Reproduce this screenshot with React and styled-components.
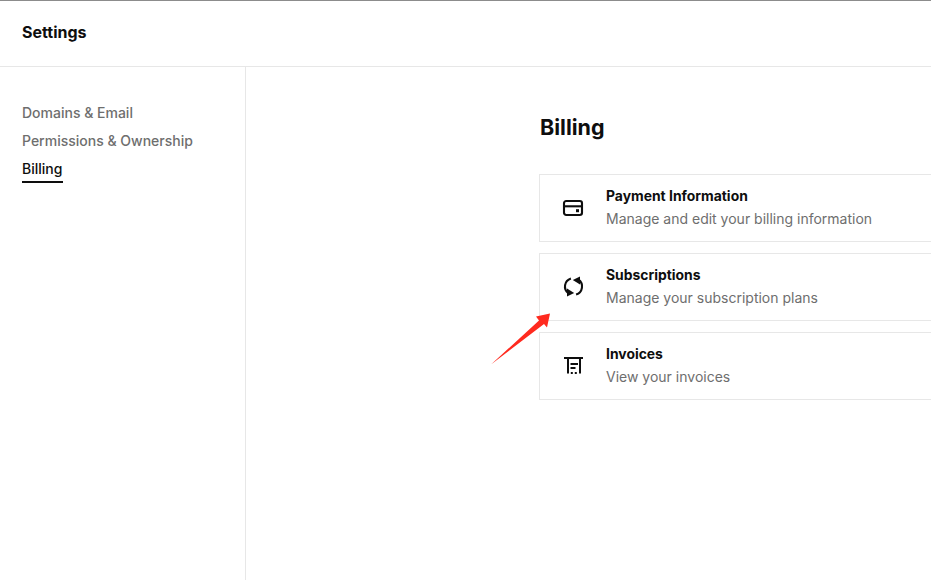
import React from "react";
import styled, { createGlobalStyle } from "styled-components";

const Global = createGlobalStyle`
  html, body { margin: 0; padding: 0; background: #fff; overflow: hidden; }
  body { font-family: Inter, "Liberation Sans", sans-serif; }
`;

const Page = styled.div`
  position: relative;
  width: 931px;
  height: 580px;
  overflow: hidden;
  display: flex;
  flex-direction: column;
  border-top: 1px solid #8c8c8c;
  box-sizing: border-box;
`;

const Header = styled.header`
  height: 66px;
  flex: none;
  box-sizing: border-box;
  border-bottom: 1px solid #e7e7e7;
  padding: 0 22px 4px;
  display: flex;
  align-items: center;
`;

const HeaderTitle = styled.h1`
  margin: 0;
  font-size: 16px;
  font-weight: 700;
  color: #0e0e0e;
`;

const Body = styled.div`
  flex: 1;
  display: flex;
  min-height: 0;
`;

const Sidebar = styled.nav`
  width: 246px;
  flex: none;
  box-sizing: border-box;
  border-right: 1px solid #e7e7e7;
  padding: 35px 22px 0;
  display: flex;
  flex-direction: column;
  align-items: flex-start;
  gap: 6px;
`;

const NavItem = styled.a`
  font-size: 14px;
  font-weight: 500;
  line-height: 22px;
  height: ${(p) => (p.$active ? "23px" : "22px")};
  padding-right: ${(p) => (p.$active ? "1px" : "0")};
  color: ${(p) => (p.$active ? "#0e0e0e" : "#6e6e6e")};
  box-shadow: ${(p) => (p.$active ? "0 2px 0 #0e0e0e" : "none")};
  white-space: nowrap;
`;

const Main = styled.main`
  flex: 1;
  min-width: 0;
  padding: 46px 0 0 293px;
`;

const Heading = styled.h2`
  margin: 0 0 32px 1px;
  font-size: 21.5px;
  line-height: 29px;
  font-weight: 700;
  color: #0e0e0e;
`;

const CardList = styled.div`
  display: flex;
  flex-direction: column;
  gap: 11px;
  width: 520px;
`;

const Card = styled.div`
  height: 68px;
  box-sizing: border-box;
  border: 1px solid #e7e7e7;
  display: flex;
  align-items: center;
  padding-left: 22px;
  gap: 22px;
`;

const IconBox = styled.span`
  width: 22px;
  height: 22px;
  flex: none;
  display: flex;
  color: #0e0e0e;
`;

const CardText = styled.div`
  display: flex;
  flex-direction: column;
  gap: 3px;
  padding-bottom: 2px;
`;

const CardTitle = styled.div`
  font-size: 13.9px;
  line-height: 20px;
  font-weight: 700;
  color: #0e0e0e;
`;

const CardDesc = styled.div`
  font-size: 14px;
  line-height: 20px;
  color: #6e6e6e;
`;

const ArrowOverlay = styled.svg`
  position: absolute;
  left: 485px;
  top: 304px;
  pointer-events: none;
`;

const CardIcon = () => (
  <svg width="22" height="22" viewBox="0 0 22 22" fill="none" stroke="currentColor" strokeWidth="2.1">
    <rect x="2" y="4" width="18" height="14" rx="2.2" />
    <path d="M2 9.3h18" />
    <rect x="14" y="12.2" width="3" height="3" fill="currentColor" stroke="none" />
  </svg>
);

const SyncIcon = () => (
  <svg width="22" height="22" viewBox="0 0 22 22" fill="none" stroke="currentColor" strokeWidth="2.1">
    <path d="M8.9 2.4A8.5 8.5 0 0 0 6.5 17.4" />
    <path d="M14.1 18.6A8.5 8.5 0 0 0 16.5 3.6" />
    <path d="M10.8 4L18 .6V8.5z" fill="currentColor" stroke="none" />
    <path d="M12.2 17L5 20.4V12.5z" fill="currentColor" stroke="none" />
  </svg>
);

const ReceiptIcon = () => (
  <svg width="22" height="22" viewBox="0 0 22 22" fill="none" stroke="currentColor" strokeWidth="2">
    <path d="M2 3h19" />
    <path d="M6 3v15.5M18 3v15.5" />
    <path d="M8.5 9h7.5M8.5 13h5" />
    <path d="M8.8 18h2M12.8 18h2" />
  </svg>
);

const items = [
  { icon: <CardIcon />, title: "Payment Information", desc: "Manage and edit your billing information" },
  { icon: <SyncIcon />, title: "Subscriptions", desc: "Manage your subscription plans" },
  { icon: <ReceiptIcon />, title: "Invoices", desc: "View your invoices" },
];

export default function App() {
  return (
    <Page>
      <Global />
      <Header>
        <HeaderTitle>Settings</HeaderTitle>
      </Header>
      <Body>
        <Sidebar>
          <NavItem>Domains &amp; Email</NavItem>
          <NavItem>Permissions &amp; Ownership</NavItem>
          <NavItem $active>Billing</NavItem>
        </Sidebar>
        <Main>
          <Heading>Billing</Heading>
          <CardList>
            {items.map((it) => (
              <Card key={it.title}>
                <IconBox>{it.icon}</IconBox>
                <CardText>
                  <CardTitle>{it.title}</CardTitle>
                  <CardDesc>{it.desc}</CardDesc>
                </CardText>
              </Card>
            ))}
          </CardList>
        </Main>
      </Body>
      <ArrowOverlay width="75" height="65" viewBox="0 0 75 65">
        <path d="M6 59.5 L54 15.5 L51 11.5 L65 8.5 L62 22.5 L59 19 Z" fill="#ff2a1f" />
      </ArrowOverlay>
    </Page>
  );
}
